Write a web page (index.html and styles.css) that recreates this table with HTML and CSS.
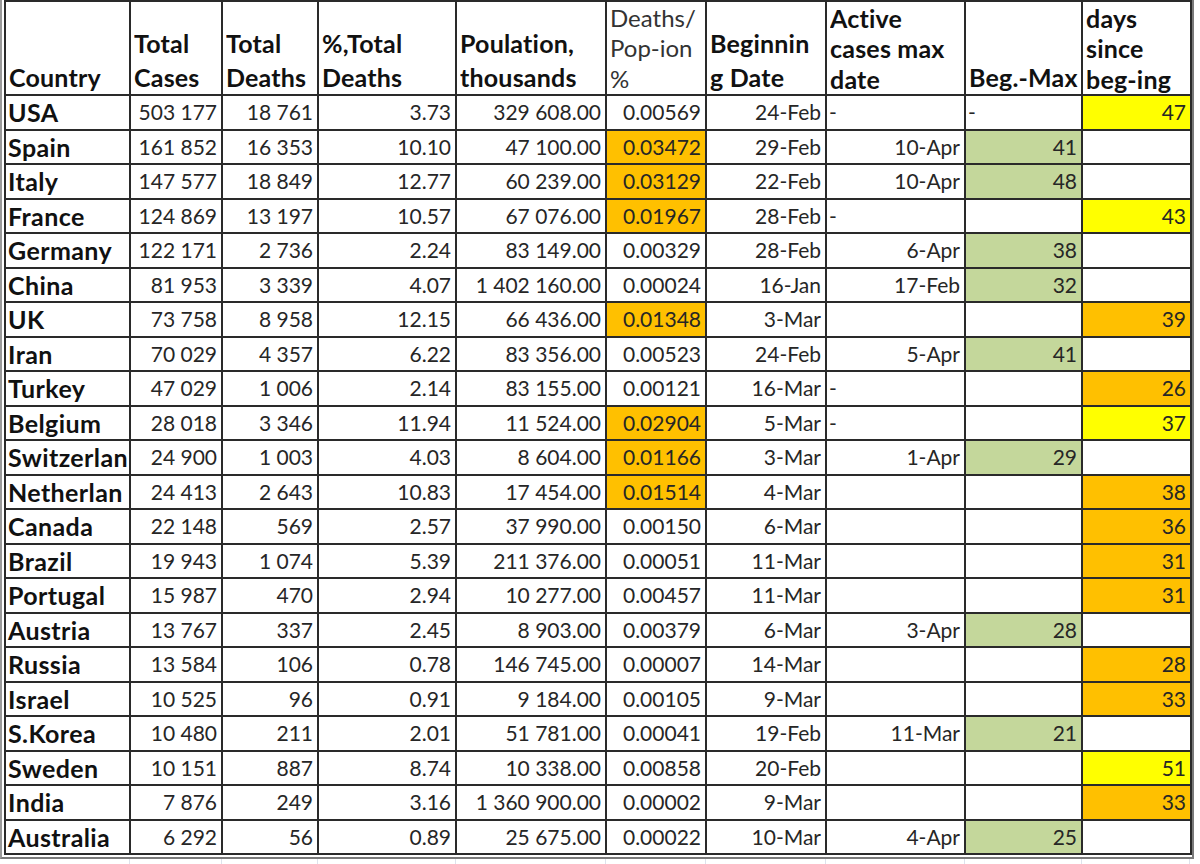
FILE: index.html
```html
<!DOCTYPE html>
<html lang="en">
<head>
<meta charset="utf-8">
<title>COVID-19 by country</title>
<link rel="stylesheet" href="styles.css">
</head>
<body>
<div class="frame">
<table class="sheet">
<colgroup>
<col class="c1"><col class="c2"><col class="c3"><col class="c4"><col class="c5"><col class="c6"><col class="c7"><col class="c8"><col class="c9"><col class="c10">
</colgroup>
<thead>
<tr>
<th><div class="hd">Country</div></th>
<th><div class="hd">Total<br>Cases</div></th>
<th><div class="hd">Total<br>Deaths</div></th>
<th><div class="hd">%,Total<br>Deaths</div></th>
<th><div class="hd">Poulation,<br>thousands</div></th>
<th><div class="hd light three">Deaths/<br>Pop-ion<br>%</div></th>
<th><div class="hd">Beginnin<br>g Date</div></th>
<th><div class="hd three">Active<br>cases max<br>date</div></th>
<th><div class="hd">Beg.-Max</div></th>
<th><div class="hd three">days<br>since<br>beg-ing</div></th>
</tr>
</thead>
<tbody>
<tr><td class="name">USA</td><td>503&nbsp;177</td><td>18&nbsp;761</td><td>3.73</td><td>329&nbsp;608.00</td><td>0.00569</td><td>24-Feb</td><td class="dash">-</td><td class="dash">-</td><td class="yel">47</td></tr>
<tr><td class="name">Spain</td><td>161&nbsp;852</td><td>16&nbsp;353</td><td>10.10</td><td>47&nbsp;100.00</td><td class="org">0.03472</td><td>29-Feb</td><td>10-Apr</td><td class="grn">41</td><td></td></tr>
<tr><td class="name">Italy</td><td>147&nbsp;577</td><td>18&nbsp;849</td><td>12.77</td><td>60&nbsp;239.00</td><td class="org">0.03129</td><td>22-Feb</td><td>10-Apr</td><td class="grn">48</td><td></td></tr>
<tr><td class="name">France</td><td>124&nbsp;869</td><td>13&nbsp;197</td><td>10.57</td><td>67&nbsp;076.00</td><td class="org">0.01967</td><td>28-Feb</td><td class="dash">-</td><td></td><td class="yel">43</td></tr>
<tr><td class="name">Germany</td><td>122&nbsp;171</td><td>2&nbsp;736</td><td>2.24</td><td>83&nbsp;149.00</td><td>0.00329</td><td>28-Feb</td><td>6-Apr</td><td class="grn">38</td><td></td></tr>
<tr><td class="name">China</td><td>81&nbsp;953</td><td>3&nbsp;339</td><td>4.07</td><td>1&nbsp;402&nbsp;160.00</td><td>0.00024</td><td>16-Jan</td><td>17-Feb</td><td class="grn">32</td><td></td></tr>
<tr><td class="name">UK</td><td>73&nbsp;758</td><td>8&nbsp;958</td><td>12.15</td><td>66&nbsp;436.00</td><td class="org">0.01348</td><td>3-Mar</td><td></td><td></td><td class="org">39</td></tr>
<tr><td class="name">Iran</td><td>70&nbsp;029</td><td>4&nbsp;357</td><td>6.22</td><td>83&nbsp;356.00</td><td>0.00523</td><td>24-Feb</td><td>5-Apr</td><td class="grn">41</td><td></td></tr>
<tr><td class="name">Turkey</td><td>47&nbsp;029</td><td>1&nbsp;006</td><td>2.14</td><td>83&nbsp;155.00</td><td>0.00121</td><td>16-Mar</td><td class="dash">-</td><td></td><td class="org">26</td></tr>
<tr><td class="name">Belgium</td><td>28&nbsp;018</td><td>3&nbsp;346</td><td>11.94</td><td>11&nbsp;524.00</td><td class="org">0.02904</td><td>5-Mar</td><td class="dash">-</td><td></td><td class="yel">37</td></tr>
<tr><td class="name">Switzerlan</td><td>24&nbsp;900</td><td>1&nbsp;003</td><td>4.03</td><td>8&nbsp;604.00</td><td class="org">0.01166</td><td>3-Mar</td><td>1-Apr</td><td class="grn">29</td><td></td></tr>
<tr><td class="name">Netherlan</td><td>24&nbsp;413</td><td>2&nbsp;643</td><td>10.83</td><td>17&nbsp;454.00</td><td class="org">0.01514</td><td>4-Mar</td><td></td><td></td><td class="org">38</td></tr>
<tr><td class="name">Canada</td><td>22&nbsp;148</td><td>569</td><td>2.57</td><td>37&nbsp;990.00</td><td>0.00150</td><td>6-Mar</td><td></td><td></td><td class="org">36</td></tr>
<tr><td class="name">Brazil</td><td>19&nbsp;943</td><td>1&nbsp;074</td><td>5.39</td><td>211&nbsp;376.00</td><td>0.00051</td><td>11-Mar</td><td></td><td></td><td class="org">31</td></tr>
<tr><td class="name">Portugal</td><td>15&nbsp;987</td><td>470</td><td>2.94</td><td>10&nbsp;277.00</td><td>0.00457</td><td>11-Mar</td><td></td><td></td><td class="org">31</td></tr>
<tr><td class="name">Austria</td><td>13&nbsp;767</td><td>337</td><td>2.45</td><td>8&nbsp;903.00</td><td>0.00379</td><td>6-Mar</td><td>3-Apr</td><td class="grn">28</td><td></td></tr>
<tr><td class="name">Russia</td><td>13&nbsp;584</td><td>106</td><td>0.78</td><td>146&nbsp;745.00</td><td>0.00007</td><td>14-Mar</td><td></td><td></td><td class="org">28</td></tr>
<tr><td class="name">Israel</td><td>10&nbsp;525</td><td>96</td><td>0.91</td><td>9&nbsp;184.00</td><td>0.00105</td><td>9-Mar</td><td></td><td></td><td class="org">33</td></tr>
<tr><td class="name">S.Korea</td><td>10&nbsp;480</td><td>211</td><td>2.01</td><td>51&nbsp;781.00</td><td>0.00041</td><td>19-Feb</td><td>11-Mar</td><td class="grn">21</td><td></td></tr>
<tr><td class="name">Sweden</td><td>10&nbsp;151</td><td>887</td><td>8.74</td><td>10&nbsp;338.00</td><td>0.00858</td><td>20-Feb</td><td></td><td></td><td class="yel">51</td></tr>
<tr><td class="name">India</td><td>7&nbsp;876</td><td>249</td><td>3.16</td><td>1&nbsp;360&nbsp;900.00</td><td>0.00002</td><td>9-Mar</td><td></td><td></td><td class="org">33</td></tr>
<tr><td class="name">Australia</td><td>6&nbsp;292</td><td>56</td><td>0.89</td><td>25&nbsp;675.00</td><td>0.00022</td><td>10-Mar</td><td>4-Apr</td><td class="grn">25</td><td></td></tr>
</tbody>
</table>
</div>
<div class="grid-below">
<span class="g1"></span><span class="g2"></span><span class="g3"></span><span class="g4"></span><span class="g5"></span><span class="g6"></span><span class="g7"></span><span class="g8"></span><span class="g9"></span><span class="g10"></span>
</div>
</body>
</html>
```
FILE: styles.css
```css
html, body {
  margin: 0;
  padding: 0;
  background: #ffffff;
}

body {
  width: 1200px;
  height: 864px;
  overflow: hidden;
  font-family: "Lato", "Liberation Sans", sans-serif;
  color: #222;
}

.frame {
  width: 1186px;
  border-left: 2px solid #9a9a9a;
  border-right: 2px solid #7a7a7a;
  border-bottom: 2px solid #7a7a7a;
  padding: 0 2px 2px 2px;
}

.sheet {
  border-collapse: collapse;
  table-layout: fixed;
  width: 1186px;
}

.c1 { width: 125px; }
.c2 { width: 92px; }
.c3 { width: 96px; }
.c4 { width: 138px; }
.c5 { width: 150px; }
.c6 { width: 100px; }
.c7 { width: 120px; }
.c8 { width: 139px; }
.c9 { width: 117px; }
.c10 { width: 109px; }

.sheet th,
.sheet td {
  border: 2px solid #2a2a2a;
  white-space: nowrap;
  overflow: hidden;
}

.sheet th {
  padding: 0 2px 0 3px;
  vertical-align: bottom;
  text-align: left;
}

.hd {
  height: 92px;
  display: flex;
  flex-direction: column;
  justify-content: flex-end;
  overflow: hidden;
  font-weight: 700;
  font-size: 25px;
  letter-spacing: 0.2px;
  line-height: 34px;
  color: #111;
}

.hd.three {
  line-height: 30.5px;
}

.hd.light {
  font-weight: 400;
  font-size: 24px;
  letter-spacing: 0;
  color: #333;
}

.sheet tbody tr {
  height: 34.5px;
}

.sheet td {
  padding: 0 4px 0 2px;
  text-align: right;
  font-size: 21px;
  line-height: 30px;
  color: #262626;
}

.sheet td.name {
  text-align: left;
  font-weight: 700;
  font-size: 25px;
  letter-spacing: 0.4px;
  color: #111;
  text-overflow: clip;
}

.sheet td.dash {
  text-align: left;
}

.sheet td.org {
  background: #ffc000;
}

.sheet td.yel {
  background: #ffff00;
}

.sheet td.grn {
  background: #c4d79b;
}

.grid-below {
  display: flex;
  height: 10px;
  padding-left: 7px;
}

.grid-below span {
  display: block;
  border-right: 1px solid #dde2ec;
}

.g1 { width: 122px; }
.g2 { width: 91px; }
.g3 { width: 95px; }
.g4 { width: 137px; }
.g5 { width: 149px; }
.g6 { width: 99px; }
.g7 { width: 119px; }
.g8 { width: 138px; }
.g9 { width: 116px; }
.g10 { width: 107px; }
```
